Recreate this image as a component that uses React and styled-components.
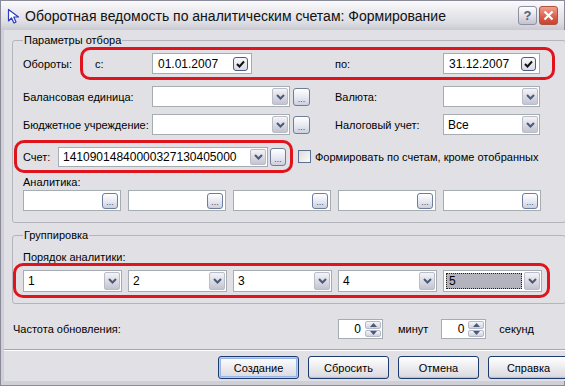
import React from 'react';
import styled, { createGlobalStyle } from 'styled-components';

const GlobalStyle = createGlobalStyle`
  html, body { margin:0; padding:0; background:#fff; }
  body { font-family:'Liberation Sans', Arial, sans-serif; font-size:11px; color:#000; }
  * { box-sizing:border-box; }
`;

////////// window //////////

const Window = styled.div`
  width:565px;
  height:386px;
  display:flex;
  flex-direction:column;
  background:#c6c6d0;
  overflow:hidden;
`;

const TitleBar = styled.div`
  height:30px;
  flex:none;
  display:flex;
  align-items:center;
  padding:0 6px 0 6px;
  background:linear-gradient(#fbfbfc 0%, #ececf0 35%, #dcdce2 75%, #c9c9d2 100%);
  border:1px solid #8a8a98;
  border-bottom:none;
`;

const TitleText = styled.div`
  flex:1;
  margin-left:4px;
  font-size:14px;
  color:#111;
  white-space:nowrap;
`;

const CapButton = styled.div`
  width:19px;
  height:19px;
  margin-left:2px;
  border:1px solid ${p => p.close ? '#b05040' : '#8f8fa2'};
  border-radius:3px;
  display:flex;
  align-items:center;
  justify-content:center;
  background:${p => p.close
    ? 'linear-gradient(#f0a090, #dc5c48 60%, #c8442f)'
    : 'linear-gradient(#ffffff, #dcdce6 60%, #c2c2d0)'};
  color:${p => p.close ? '#fff' : '#5c5c70'};
  font-size:13px;
  font-weight:bold;
`;

const Frame = styled.div`
  flex:1;
  display:flex;
  padding:0 3px 4px 3px;
  border-left:1px solid #8a8a98;
  border-right:1px solid #8a8a98;
  border-bottom:1px solid #8a8a98;
  background:#cfcfd8;
`;

const Body = styled.div`
  flex:1;
  display:flex;
  flex-direction:column;
  padding:4px 8px 0 8px;
  background:#e1e0e4;
`;

////////// group box //////////

const Group = styled.fieldset`
  margin:${p => p.top || 0}px 0 0 0;
  padding:0 10px ${p => p.bottom || 0}px 10px;
  border:1px solid #b4b4bc;
  border-radius:3px;
  min-width:0;
`;

const Legend = styled.legend`
  padding:0 1px;
  line-height:12px;
  font-size:11px;
`;

const Row = styled.div`
  display:flex;
  align-items:center;
  height:${p => p.h || 21}px;
  margin-top:${p => p.top || 0}px;
  margin-left:${p => p.shift || 0}px;
`;

const Label = styled.div`
  width:${p => p.w ? `${p.w}px` : 'auto'};
  margin-left:${p => p.ml || 0}px;
  flex:none;
  white-space:nowrap;
  line-height:12px;
`;

const Caption = styled.div`
  line-height:12px;
  margin-top:${p => p.top || 0}px;
`;

////////// red marks //////////

const Mark = styled.div`
  display:flex;
  align-items:center;
  flex:none;
  width:${p => p.w}px;
  height:${p => p.h}px;
  margin-left:${p => p.ml || 0}px;
  padding-left:${p => p.pl || 0}px;
  border:3px solid #e0141c;
  border-radius:10px;
`;

////////// fields //////////

const Field = styled.div`
  display:flex;
  align-items:center;
  flex:none;
  width:${p => p.w}px;
  height:${p => p.h || 21}px;
  margin-left:${p => p.ml || 0}px;
  border:1px solid #a5acb2;
  background:#fff;
  padding:1px;
`;

const FieldText = styled.div`
  flex:1;
  padding-left:${p => p.pl || 3}px;
  text-align:${p => p.right ? 'right' : 'left'};
  padding-right:${p => p.right ? 4 : 0}px;
  font-size:${p => p.big ? 12 : 11}px;
  white-space:nowrap;
  overflow:hidden;
`;

const FocusText = styled.div`
  flex:1;
  align-self:stretch;
  margin:1px 2px 1px 1px;
  padding-left:3px;
  display:flex;
  align-items:center;
  background:#b3b3bd;
  outline:1px dotted #222;
  outline-offset:-1px;
  font-size:12px;
`;

const ArrowBtn = styled.div`
  width:16px;
  align-self:stretch;
  flex:none;
  display:flex;
  align-items:center;
  justify-content:center;
  border:1px solid #b9bccb;
  border-radius:2px;
  background:linear-gradient(#f4f4f7, #d6d7e0 60%, #c3c4d0);
`;

const DotsBtn = styled.div`
  width:${p => p.w || 16}px;
  height:${p => p.h || 16}px;
  flex:none;
  margin-left:${p => p.ml || 0}px;
  margin-right:${p => p.mr || 0}px;
  border:1px solid #6f7d9c;
  border-radius:3px;
  background:linear-gradient(#ffffff, #e6e8f0 55%, #ccd0de);
  display:flex;
  align-items:flex-end;
  justify-content:center;
  padding-bottom:2px;
  font-size:9px;
  line-height:8px;
  color:#44506a;
`;

const CheckBtn = styled.div`
  width:15px;
  height:14px;
  flex:none;
  margin-right:2px;
  border:1px solid #4a5d88;
  border-radius:3px;
  background:linear-gradient(#f8f8fb, #d8dbe6);
  display:flex;
  align-items:center;
  justify-content:center;
`;

const CheckBox = styled.div`
  width:13px;
  height:13px;
  flex:none;
  margin-left:${p => p.ml || 0}px;
  margin-right:4px;
  border:1px solid #5d6f8f;
  background:linear-gradient(135deg, #dcdcd7, #fdfdfd);
`;

const Spin = styled.div`
  width:16px;
  align-self:stretch;
  flex:none;
  display:flex;
  flex-direction:column;
  gap:1px;
`;

const SpinPart = styled.div`
  flex:1;
  border:1px solid #b4b8c8;
  border-radius:2px;
  background:linear-gradient(#f6f6f9, #d0d2dc);
  display:flex;
  align-items:center;
  justify-content:center;
`;

////////// bottom //////////

const Separator = styled.div`
  margin:10px -8px 0 -8px;
  height:2px;
  border-top:1px solid #a6a6ae;
  border-bottom:1px solid #fff;
`;

const ButtonBar = styled.div`
  display:flex;
  justify-content:flex-end;
  gap:9px;
  margin-top:5px;
  margin-right:-3px;
`;

const Button = styled.div`
  width:81px;
  height:23px;
  border:1px solid #1c3a6e;
  border-radius:3px;
  background:linear-gradient(#ffffff, #f0f0f3 40%, #dcdce2 90%, #c8c8d0);
  box-shadow:${p => p.def ? 'inset 0 0 0 1px #b8cdf0, inset 0 0 0 2px #98b4e4' : 'inset 0 -1px 0 #c0c0c8'};
  display:flex;
  align-items:center;
  justify-content:center;
  font-size:11px;
`;

////////// icons //////////

const Chevron = () => (
  <svg width="9" height="6" viewBox="0 0 9 6">
    <path d="M1 1 L4.5 4.5 L8 1" fill="none" stroke="#4a5a7a" strokeWidth="2" />
  </svg>
);

const Tick = () => (
  <svg width="9" height="8" viewBox="0 0 9 8">
    <path d="M1 4 L3.5 6.5 L8 1.5" fill="none" stroke="#111" strokeWidth="2" />
  </svg>
);

const Tri = ({ up }) => (
  <svg width="7" height="4" viewBox="0 0 7 4">
    <path d={up ? 'M0 4 L3.5 0 L7 4 Z' : 'M0 0 L3.5 4 L7 0 Z'} fill="#4a5a7a" />
  </svg>
);

const AppIcon = () => (
  <svg width="14" height="16" viewBox="0 0 14 16">
    <path d="M1.5 1.5 L1.5 13 L4.5 10 L7 15 L9 14 L6.8 9 L11.5 9 Z" fill="#fff" stroke="#2a3cc0" strokeWidth="1.2" strokeLinejoin="round" />
  </svg>
);

const CloseX = () => (
  <svg width="11" height="11" viewBox="0 0 11 11">
    <path d="M1.5 1.5 L9.5 9.5 M9.5 1.5 L1.5 9.5" stroke="#fff" strokeWidth="2.2" />
  </svg>
);

////////// controls //////////

const Combo = ({ w, h, value, ml, focus }) => (
  <Field w={w} h={h} ml={ml}>
    {focus ? <FocusText>{value}</FocusText> : <FieldText big>{value}</FieldText>}
    <ArrowBtn><Chevron /></ArrowBtn>
  </Field>
);

const DateField = ({ value, w, ml }) => (
  <Field w={w} ml={ml}>
    <FieldText big pl={4}>{value}</FieldText>
    <CheckBtn><Tick /></CheckBtn>
  </Field>
);

const Picker = ({ w }) => (
  <Field w={w}>
    <FieldText />
    <DotsBtn mr={1}>...</DotsBtn>
  </Field>
);

const SpinField = ({ ml }) => (
  <Field w={45} h={20} ml={ml}>
    <FieldText right big>0</FieldText>
    <Spin>
      <SpinPart><Tri up /></SpinPart>
      <SpinPart><Tri /></SpinPart>
    </Spin>
  </Field>
);

const PickRow = styled.div`
  display:flex;
  gap:7px;
  margin-top:${p => p.top || 0}px;
  height:21px;
`;

const ComboRow = styled.div`
  display:flex;
  gap:6px;
`;

////////// app //////////

const App = () => (
  <Window>
    <GlobalStyle />
    <TitleBar>
      <AppIcon />
      <TitleText>Оборотная ведомость по аналитическим счетам: Формирование</TitleText>
      <CapButton>?</CapButton>
      <CapButton close><CloseX /></CapButton>
    </TitleBar>
    <Frame>
      <Body>
        <Group bottom={11}>
          <Legend>Параметры отбора</Legend>
          <Row h={33} top={1}>
            <Label w={57}>Обороты:</Label>
            <Mark w={475} h={33} pl={12}>
              <Label w={57}>с:</Label>
              <DateField w={100} value="01.01.2007" />
              <Label w={108} ml={83}>по:</Label>
              <DateField w={97} value="31.12.2007" />
            </Mark>
          </Row>
          <Row top={6}>
            <Label w={129}>Балансовая единица:</Label>
            <Combo w={138} />
            <DotsBtn w={17} h={18} ml={3}>...</DotsBtn>
            <Label w={108} ml={25}>Валюта:</Label>
            <Combo w={97} />
          </Row>
          <Row top={7}>
            <Label w={129}>Бюджетное учреждение:</Label>
            <Combo w={138} />
            <DotsBtn w={17} h={18} ml={3}>...</DotsBtn>
            <Label w={108} ml={25}>Налоговый учет:</Label>
            <Combo w={97} value="Все" />
          </Row>
          <Row h={33} top={5} shift={-9}>
            <Mark w={279} h={33} pl={6}>
              <Label w={35}>Счет:</Label>
              <Combo w={210} h={20} value="14109014840000327130405000" />
              <DotsBtn w={16} h={18} ml={2}>...</DotsBtn>
            </Mark>
            <CheckBox ml={5} />
            <Label>Формировать по счетам, кроме отобранных</Label>
          </Row>
          <Caption top={3}>Аналитика:</Caption>
          <PickRow top={2}>
            <Picker w={98} />
            <Picker w={98} />
            <Picker w={98} />
            <Picker w={98} />
            <Picker w={98} />
          </PickRow>
        </Group>
        <Group top={6} bottom={5}>
          <Legend>Группировка</Legend>
          <Caption top={10}>Порядок аналитики:</Caption>
          <Row h={35} shift={-10}>
            <Mark w={537} h={35} pl={7}>
              <ComboRow>
                <Combo w={99} h={22} value="1" />
                <Combo w={99} h={22} value="2" />
                <Combo w={99} h={22} value="3" />
                <Combo w={99} h={22} value="4" />
                <Combo w={99} h={22} value="5" focus />
              </ComboRow>
            </Mark>
          </Row>
        </Group>
        <Row h={20} top={15} shift={1}>
          <Label w={325}>Частота обновления:</Label>
          <SpinField />
          <Label ml={15}>минут</Label>
          <SpinField ml={13} />
          <Label ml={13}>секунд</Label>
        </Row>
        <Separator />
        <ButtonBar>
          <Button def>Создание</Button>
          <Button>Сбросить</Button>
          <Button>Отмена</Button>
          <Button>Справка</Button>
        </ButtonBar>
      </Body>
    </Frame>
  </Window>
);

export default App;
